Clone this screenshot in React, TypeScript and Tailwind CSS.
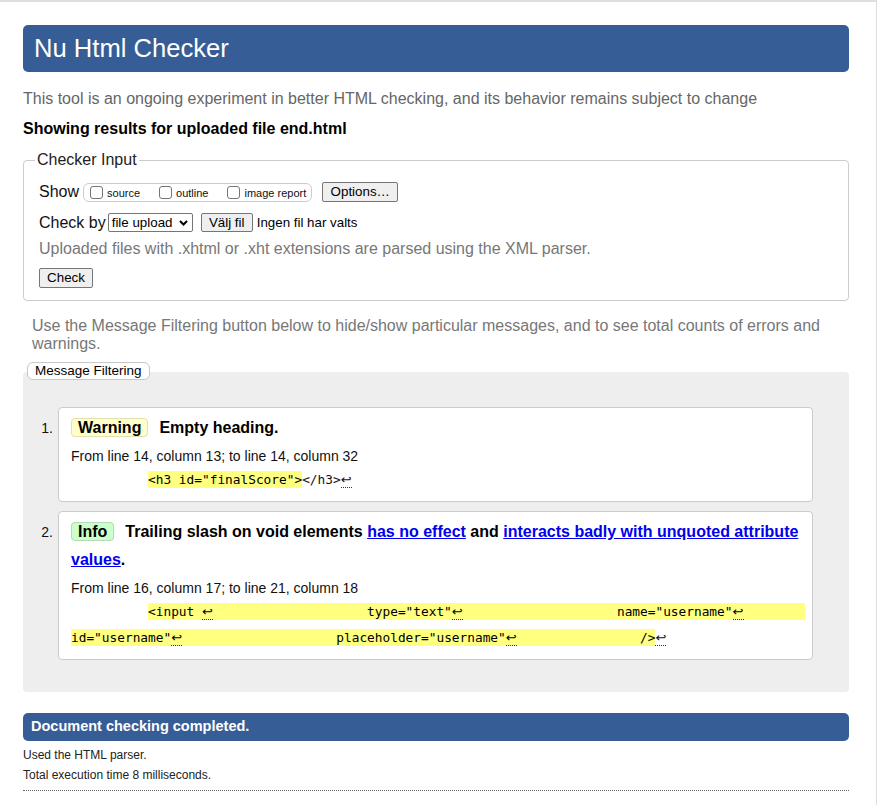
import type { ReactNode } from "react";

const sp = (n: number) => " ".repeat(n);

function Ret() {
  return (
    <span className="inline-block w-[11px] border-b border-dotted border-[#333] font-['DejaVu_Sans',sans-serif] text-[13px] leading-[15px]">
      ↩
    </span>
  );
}

function Hl({ children }: { children: ReactNode }) {
  return <mark className="bg-[#ffff80] py-[1px] text-black">{children}</mark>;
}

function Btn({ children, className }: { children: ReactNode; className: string }) {
  return (
    <button
      className={`inline-flex items-center justify-center rounded-[2px] border border-[#767676] bg-[#efefef] text-[13.33px] text-black ${className}`}
      type="button"
    >
      {children}
    </button>
  );
}

function Check({ label }: { label: string }) {
  return (
    <span className="flex items-center">
      <span className="h-[13px] w-[13px] rounded-[3px] border border-[#767676] bg-white" />
      <span className="ml-[4px] mt-[3px] text-[11px] leading-[13px]">{label}</span>
    </span>
  );
}

function Item({ n, children }: { n: number; children: ReactNode }) {
  return (
    <li className="flex">
      <span className="w-[35px] pr-[5px] pt-[7px] text-right text-[14px] leading-[28px]">{n}.</span>
      <div className="flex-1 rounded-[4px] border border-[#ccc] bg-white pb-[8px] pl-[12px] pr-[6px] pt-[6px]">
        {children}
      </div>
    </li>
  );
}

export default function App() {
  return (
    <div className="min-h-[805px] border-r border-t-2 border-[#dedede] bg-white font-['Liberation_Sans',Arial,sans-serif] text-[#111]">
      <div className="ml-[23px] w-[826px]">
        <header className="mt-[23px] flex h-[47px] items-center rounded-[5px] bg-[#365d95] px-[11px]">
          <h1 className="text-[25.6px] font-normal leading-none text-white">Nu Html Checker</h1>
        </header>

        <p className="mt-[18px] text-[16px] leading-[18px] text-[#666]">
          This tool is an ongoing experiment in better HTML checking, and its behavior remains subject to change
        </p>
        <p className="mt-[12px] text-[16px] font-bold leading-[18px] text-black">
          Showing results for uploaded file end.html
        </p>

        <fieldset className="mt-[13px] rounded-[4px] border border-[#ccc] pb-[11px] pl-[11px] pr-[12px]">
          <legend className="px-[2px] text-[16px] leading-[18px] text-[#222]">Checker Input</legend>
          <div className="pl-[4px]">
            <div className="mt-[12px] flex h-[22px] items-center">
              <span className="text-[16px]">Show</span>
              <span className="ml-[4px] flex h-[19px] items-center gap-[19px] rounded-[6px] border border-[#ccc] pl-[6px] pr-[5px]">
                <Check label="source" />
                <Check label="outline" />
                <Check label="image report" />
              </span>
              <Btn className="ml-[10px] h-[20px] w-[76px]">Options…</Btn>
            </div>
            <div className="mt-[9px] flex h-[21px] items-center">
              <span className="text-[16px]">Check by</span>
              <span className="ml-[2px] flex h-[19px] w-[85px] items-center justify-between rounded-[2px] border border-[#767676] bg-white pl-[3px] pr-[4px] text-[13.33px] text-black">
                file upload
                <svg width="9" height="6" viewBox="0 0 9 6">
                  <path d="M1 1l3.5 3.5L8 1" fill="none" stroke="#000" strokeWidth="2" />
                </svg>
              </span>
              <Btn className="ml-[8px] h-[19px] w-[52px]">Välj fil</Btn>
              <span className="ml-[4px] text-[13.33px] text-black">Ingen fil har valts</span>
            </div>
            <p className="mt-[7px] text-[16px] leading-[18px] text-[#777]">
              Uploaded files with .xhtml or .xht extensions are parsed using the XML parser.
            </p>
            <Btn className="mt-[10px] h-[20px] w-[54px]">Check</Btn>
          </div>
        </fieldset>

        <p className="mt-[16px] px-[9px] text-[16px] leading-[18px] text-[#777]">
          Use the Message Filtering button below to hide/show particular messages, and to see total counts of errors and
          warnings.
        </p>

        <div className="mt-[9px]">
          <button
            className="relative z-10 ml-[4px] flex h-[18px] items-center rounded-[6px] border border-[#c8c8c8] bg-white px-[7px] text-[13.5px] text-black"
            type="button"
          >
            Message Filtering
          </button>
          <div className="-mt-[8px] rounded-[4px] bg-[#eee] pb-[32px] pr-[36px] pt-[35px]">
            <ol className="flex flex-col gap-[9px]">
              <Item n={1}>
                <p className="text-[16px] font-bold leading-[28px] text-black">
                  <strong className="mr-[11px] rounded-[4px] border border-[#e2e2b0] bg-[#ffffcc] px-[6px]">Warning</strong>
                  Empty heading.
                </p>
                <p className="text-[14px] leading-[28px]">From line 14, column 13; to line 14, column 32</p>
                <div className="-mt-[3px] whitespace-pre font-['DejaVu_Sans_Mono',monospace] text-[12.8px] leading-[26px] text-[#111]">
                  {sp(10)}
                  <Hl>{'<h3 id="finalScore">'}</Hl>
                  {"</h3>"}
                  <Ret />
                </div>
              </Item>
              <Item n={2}>
                <p className="text-[16px] font-bold leading-[28px] text-black">
                  <strong className="mr-[11px] rounded-[4px] border border-[#b4dcb4] bg-[#ccffcc] px-[6px]">Info</strong>
                  Trailing slash on void elements{" "}
                  <a className="text-[#0000ee] underline" href="#">
                    has no effect
                  </a>{" "}
                  and{" "}
                  <a className="text-[#0000ee] underline" href="#">
                    interacts badly with unquoted attribute values
                  </a>
                  .
                </p>
                <p className="text-[14px] leading-[28px]">From line 16, column 17; to line 21, column 18</p>
                <div className="-mt-[3px] whitespace-pre font-['DejaVu_Sans_Mono',monospace] text-[12.8px] leading-[26px] text-[#111]">
                  <div>
                    {sp(10)}
                    <Hl>
                      {"<input "}
                      <Ret />
                      {sp(20)}
                      {'type="text"'}
                      <Ret />
                      {sp(20)}
                      {'name="username"'}
                      <Ret />
                      {sp(8)}
                    </Hl>
                  </div>
                  <div>
                    <Hl>
                      {'id="username"'}
                      <Ret />
                      {sp(20)}
                      {'placeholder="username"'}
                      <Ret />
                      {sp(16)}
                      {"/>"}
                    </Hl>
                    <Ret />
                  </div>
                </div>
              </Item>
            </ol>
          </div>
        </div>

        <div className="mt-[21px] flex h-[28px] items-center rounded-[5px] bg-[#365d95] px-[8px]">
          <span className="text-[14.5px] font-bold text-white">Document checking completed.</span>
        </div>
        <p className="mt-[4px] text-[12px] leading-[20px] text-[#222]">Used the HTML parser.</p>
        <p className="text-[12px] leading-[20px] text-[#222]">Total execution time 8 milliseconds.</p>
        <div className="mt-[5px] border-t border-dotted border-[#666]" />
      </div>
    </div>
  );
}
